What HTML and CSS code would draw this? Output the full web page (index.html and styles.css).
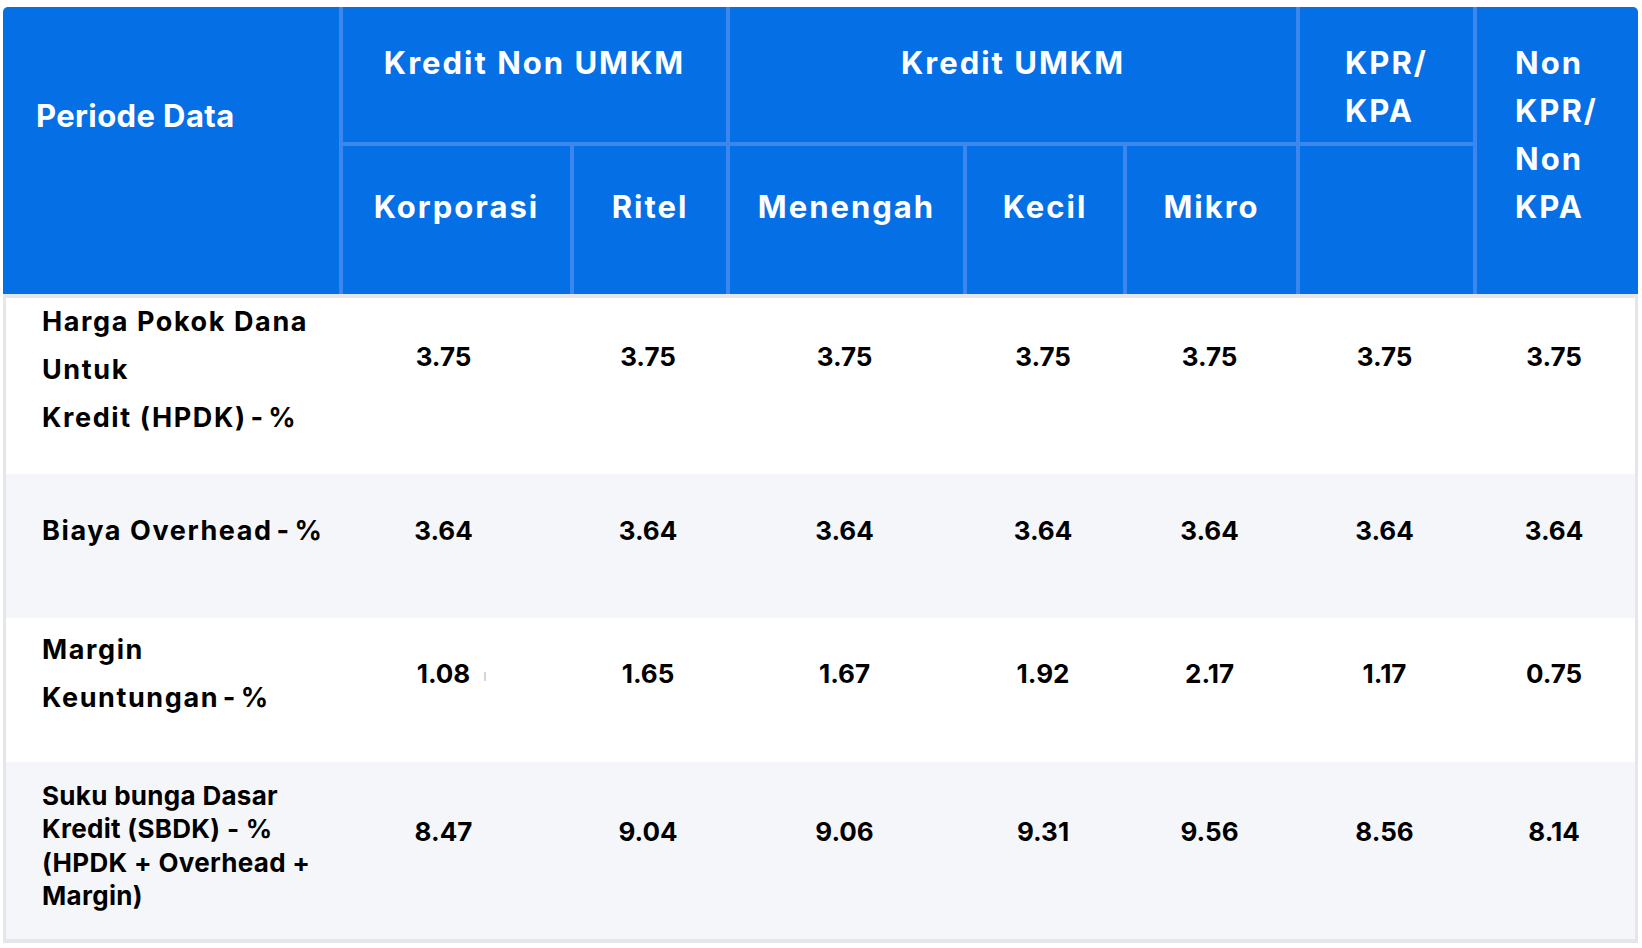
FILE: index.html
```html
<!DOCTYPE html>
<html lang="id">
<head>
<meta charset="utf-8">
<title>Suku Bunga Dasar Kredit</title>
<link rel="stylesheet" href="styles.css">
</head>
<body>
<div class="page">
  <table class="sbdk">
    <colgroup>
      <col class="c1"><col class="c2"><col class="c3"><col class="c4"><col class="c5"><col class="c6"><col class="c7"><col class="c8">
    </colgroup>
    <thead>
      <tr class="h1">
        <th rowspan="2" class="period">Periode Data</th>
        <th colspan="2" class="group">Kredit Non UMKM</th>
        <th colspan="3" class="group">Kredit UMKM</th>
        <th class="group kpr">KPR/<br>KPA</th>
        <th rowspan="2" class="nonkpr">Non<br>KPR/<br>Non<br>KPA</th>
      </tr>
      <tr class="h2">
        <th class="sub">Korporasi</th>
        <th class="sub">Ritel</th>
        <th class="sub">Menengah</th>
        <th class="sub">Kecil</th>
        <th class="sub">Mikro</th>
        <th class="sub"></th>
      </tr>
    </thead>
    <tbody>
      <tr class="r1">
        <td class="lbl">Harga Pokok Dana<br>Untuk<br>Kredit (HPDK)&#8202;-&#8202;%</td>
        <td class="num corp">3.75</td><td class="num">3.75</td><td class="num">3.75</td><td class="num">3.75</td><td class="num">3.75</td><td class="num">3.75</td><td class="num last">3.75</td>
      </tr>
      <tr class="r2 alt">
        <td class="lbl">Biaya Overhead&#8202;-&#8202;%</td>
        <td class="num corp">3.64</td><td class="num">3.64</td><td class="num">3.64</td><td class="num">3.64</td><td class="num">3.64</td><td class="num">3.64</td><td class="num last">3.64</td>
      </tr>
      <tr class="r3">
        <td class="lbl">Margin<br>Keuntungan&#8202;-&#8202;%</td>
        <td class="num corp">1.08<span class="tick"></span></td><td class="num">1.65</td><td class="num">1.67</td><td class="num">1.92</td><td class="num">2.17</td><td class="num">1.17</td><td class="num last">0.75</td>
      </tr>
      <tr class="r4 alt">
        <td class="lbl">Suku bunga Dasar<br>Kredit (SBDK) - %<br>(HPDK + Overhead +<br>Margin)</td>
        <td class="num corp">8.47</td><td class="num">9.04</td><td class="num">9.06</td><td class="num">9.31</td><td class="num">9.56</td><td class="num">8.56</td><td class="num last">8.14</td>
      </tr>
    </tbody>
  </table>
</div>
</body>
</html>
```
FILE: styles.css
```css
* { box-sizing: border-box; }

html, body {
  margin: 0;
  background: #ffffff;
}

body {
  font-family: "Inter", "Open Sans", "DejaVu Sans", sans-serif;
  font-weight: 700;
  color: #000000;
}

.page {
  padding: 7px 4px 0 3px;
}

.sbdk {
  width: 1635px;
  table-layout: fixed;
  border-collapse: separate;
  border-spacing: 0;
}

.c1 { width: 336px; }
.c2 { width: 231px; }
.c3 { width: 156px; }
.c4 { width: 237px; }
.c5 { width: 160px; }
.c6 { width: 173px; }
.c7 { width: 177px; }
.c8 { width: 165px; }

/* ---------- header ---------- */
.sbdk th {
  background: #0570e6;
  color: #ffffff;
  font-size: 31px;
  letter-spacing: 2px;
  line-height: 48px;
  font-weight: 700;
  vertical-align: top;
  text-align: center;
  padding: 0;
  border-left: 4px solid #3c87ee;
}

.sbdk th.period {
  border-left: 0;
  text-align: left;
  letter-spacing: 0.4px;
  padding: 85px 0 0 33px;
  border-top-left-radius: 5px;
}

.sbdk th.group {
  padding-top: 32px;
  padding-bottom: 7px;
  border-bottom: 4px solid #3c87ee;
}

.sbdk th.kpr {
  text-align: left;
  padding-left: 45px;
}

.sbdk th.nonkpr {
  text-align: left;
  padding: 32px 0 63px 38px;
  border-top-right-radius: 5px;
}

.sbdk th.sub {
  padding-top: 37px;
  padding-bottom: 63px;
}

/* ---------- body ---------- */
.sbdk td {
  font-size: 26px;
  line-height: 48px;
  vertical-align: top;
  padding: 0;
  background: #ffffff;
}

.sbdk tr.alt td { background: #f5f6fa; }

.sbdk td.lbl {
  text-align: left;
  font-size: 27px;
  letter-spacing: 1.6px;
  padding-left: 36px;
  border-left: 3px solid #e4e6eb;
}

.sbdk td.num {
  text-align: center;
}

.sbdk td.corp {
  padding-right: 22px;
  position: relative;
}

.sbdk td.last { border-right: 3px solid #e4e6eb; }

.sbdk tr.r1 td { border-top: 4px solid #e4e6eb; height: 180px; }
.sbdk tr.r1 td.lbl { padding-top: 0; }
.sbdk tr.r1 td.num { padding-top: 35px; }

.sbdk tr.r2 td { height: 144px; }
.sbdk tr.r2 td.lbl,
.sbdk tr.r2 td.num { padding-top: 33px; }

.sbdk tr.r3 td { height: 144px; }
.sbdk tr.r3 td.lbl { padding-top: 8px; }
.sbdk tr.r3 td.num { padding-top: 32px; }

.sbdk tr.r4 td { border-bottom: 4px solid #e4e6eb; height: 181px; }
.sbdk tr.r4 td.lbl {
  font-size: 26px;
  letter-spacing: 0.3px;
  line-height: 33.3px;
  padding-top: 17px;
}
.sbdk tr.r4 td.num { padding-top: 46px; }

.tick {
  position: absolute;
  left: 145px;
  top: 54px;
  width: 2px;
  height: 9px;
  background: #d4d6da;
}
```
